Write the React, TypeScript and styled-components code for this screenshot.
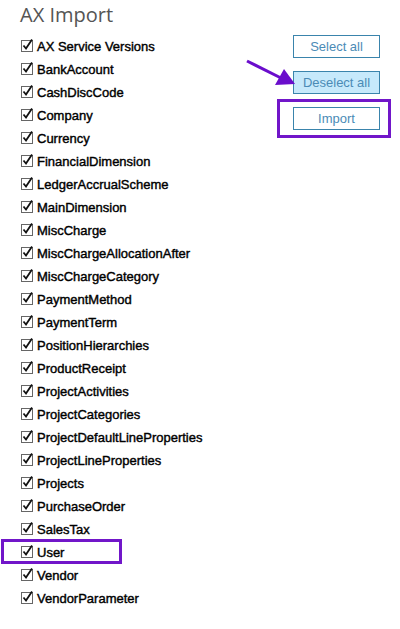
import styled, { createGlobalStyle } from 'styled-components';

const items = [
  'AX Service Versions',
  'BankAccount',
  'CashDiscCode',
  'Company',
  'Currency',
  'FinancialDimension',
  'LedgerAccrualScheme',
  'MainDimension',
  'MiscCharge',
  'MiscChargeAllocationAfter',
  'MiscChargeCategory',
  'PaymentMethod',
  'PaymentTerm',
  'PositionHierarchies',
  'ProductReceipt',
  'ProjectActivities',
  'ProjectCategories',
  'ProjectDefaultLineProperties',
  'ProjectLineProperties',
  'Projects',
  'PurchaseOrder',
  'SalesTax',
  'User',
  'Vendor',
  'VendorParameter',
];

const GlobalStyle = createGlobalStyle`
  body {
    margin: 0;
    background: #fff;
    font-family: "Liberation Sans", Arial, sans-serif;
  }
`;

const CheckIcon = () => (
  <svg width="14" height="14" viewBox="0 0 14 14">
    <rect x="1.5" y="2.5" width="11" height="11" fill="#fff" stroke="#666" strokeWidth="1" />
    <path d="M3.5 7.5 L6 10.5 L12 1.5" fill="none" stroke="#111" strokeWidth="1.8" />
  </svg>
);

const App = () => {
  return (
    <Page>
      <GlobalStyle />
      <Title>AX Import</Title>
      <Body>
        <List>
          {items.map((name) => (
            <Row key={name} highlighted={name === 'User'}>
              <CheckIcon />
              <span>{name}</span>
            </Row>
          ))}
        </List>
        <Actions>
          <Button>Select all</Button>
          <ButtonWrap>
            <Arrow width="52" height="28" viewBox="0 0 52 28">
              <line x1="2" y1="2" x2="36" y2="19" stroke="#6a0dcc" strokeWidth="3" />
              <polygon points="50,25 30,26 39,10" fill="#6a0dcc" />
            </Arrow>
            <Button active>Deselect all</Button>
          </ButtonWrap>
          <ButtonWrap>
            <Highlight />
            <Button>Import</Button>
          </ButtonWrap>
        </Actions>
      </Body>
    </Page>
  );
};

const Page = styled.div`
  padding: 0 20px 0 20px;
  width: 400px;
  box-sizing: border-box;
`;

const Title = styled.h1`
  margin: 0;
  padding-top: 1px;
  font-family: "Open Sans", sans-serif;
  font-weight: 400;
  font-size: 20px;
  line-height: 28px;
  color: #555;
`;

const Body = styled.div`
  display: flex;
  justify-content: space-between;
  align-items: flex-start;
`;

const List = styled.div`
  display: flex;
  flex-direction: column;
  padding-top: 6px;
`;

const Row = styled.label<{ highlighted?: boolean }>`
  position: relative;
  display: flex;
  align-items: center;
  gap: 3px;
  height: 23px;
  font-size: 13px;
  color: #000;
  -webkit-text-stroke: 0.4px #000;

  svg {
    flex: none;
    margin-top: -3px;
  }

  &::after {
    content: '';
    display: ${(p) => (p.highlighted ? 'block' : 'none')};
    position: absolute;
    left: -19px;
    top: -2px;
    width: 115px;
    height: 19px;
    border: 3px solid #7116c9;
  }
`;

const Actions = styled.div`
  display: flex;
  flex-direction: column;
  gap: 13px;
  padding-top: 6px;
  width: 87px;
`;

const ButtonWrap = styled.div`
  position: relative;
`;

const Button = styled.button<{ active?: boolean }>`
  display: block;
  width: 87px;
  height: 23px;
  padding: 0;
  border: 1px solid #3a84ac;
  border-radius: 0;
  background: ${(p) => (p.active ? '#c6e9fb' : '#fff')};
  color: #4b8bb6;
  font-family: "Liberation Sans", Arial, sans-serif;
  font-size: 13px;
  cursor: pointer;
`;

const Arrow = styled.svg`
  position: absolute;
  left: -48px;
  top: -12px;
`;

const Highlight = styled.div`
  position: absolute;
  left: -16px;
  top: -8px;
  width: 108px;
  height: 33px;
  border: 3px solid #7116c9;
`;

export default App;
